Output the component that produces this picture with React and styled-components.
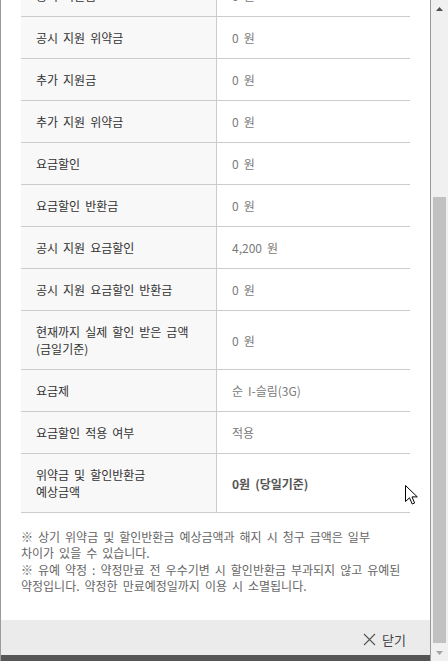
import { useLayoutEffect, useRef } from "react";
import styled, { createGlobalStyle } from "styled-components";

const GlobalStyle = createGlobalStyle`
  html, body {
    margin: 0;
    padding: 0;
    height: 100%;
    overflow: hidden;
    background: #ffffff;
  }
  #root {
    height: 100%;
  }
  * {
    box-sizing: border-box;
  }
`;

const rows = [
  { label: "공시 지원금", value: "0 원" },
  { label: "공시 지원 위약금", value: "0 원" },
  { label: "추가 지원금", value: "0 원" },
  { label: "추가 지원 위약금", value: "0 원" },
  { label: "요금할인", value: "0 원" },
  { label: "요금할인 반환금", value: "0 원" },
  { label: "공시 지원 요금할인", value: "4,200 원" },
  { label: "공시 지원 요금할인 반환금", value: "0 원" },
  { label: ["현재까지 실제 할인 받은 금액", "(금일기준)"], value: "0 원" },
  { label: "요금제", value: "순 I-슬림(3G)" },
  { label: "요금할인 적용 여부", value: "적용" },
  { label: ["위약금 및 할인반환금", "예상금액"], value: "0원 (당일기준)", strong: true },
];

const renderLines = (text) =>
  Array.isArray(text)
    ? text.map((line, i) => (
        <span key={i}>
          {line}
          {i < text.length - 1 && <br />}
        </span>
      ))
    : text;

const App = () => {
  const bodyRef = useRef(null);

  useLayoutEffect(() => {
    // the modal is shown scrolled down a little
    if (bodyRef.current) bodyRef.current.scrollTop = 46;
  }, []);

  return (
    <Page>
      <GlobalStyle />
      <Panel>
        <Body ref={bodyRef}>
          <Table>
            {rows.map((row, i) => (
              <Row key={i}>
                <Label>{renderLines(row.label)}</Label>
                <Value $strong={row.strong}>{row.value}</Value>
              </Row>
            ))}
          </Table>
          <Notes>
            <Note>
              ※ 상기 위약금 및 할인반환금 예상금액과 해지 시 청구 금액은 일부
              <br />
              차이가 있을 수 있습니다.
            </Note>
            <Note>
              ※ 유예 약정 : 약정만료 전 우수기변 시 할인반환금 부과되지 않고 유예된
              <br />
              약정입니다. 약정한 만료예정일까지 이용 시 소멸됩니다.
            </Note>
          </Notes>
        </Body>
        <Footer>
          <CloseButton type="button">
            <svg width="13" height="13" viewBox="0 0 13 13">
              <path d="M1 1 L12 12 M12 1 L1 12" stroke="#555" strokeWidth="1.1" fill="none" />
            </svg>
            닫기
          </CloseButton>
        </Footer>
        <BottomBar />
      </Panel>
      <Scrollbar>
        <ScrollButton>
          <svg width="7" height="4" viewBox="0 0 7 4">
            <path d="M0 4 L3.5 0 L7 4 Z" fill="#505050" />
          </svg>
        </ScrollButton>
        <Track>
          <Thumb />
        </Track>
        <ScrollButton>
          <svg width="7" height="4" viewBox="0 0 7 4">
            <path d="M0 0 L7 0 L3.5 4 Z" fill="#a3a3a3" />
          </svg>
        </ScrollButton>
      </Scrollbar>
      <Cursor width="13" height="20" viewBox="0 0 13 20">
        <path
          d="M0.5 0.5 L0.5 16.5 L4.5 12.8 L7.2 19 L9.6 18 L7 11.9 L12.3 11.9 Z"
          fill="#ffffff"
          stroke="#000000"
          strokeWidth="1"
          strokeLinejoin="round"
        />
      </Cursor>
    </Page>
  );
};

export default App;

const Page = styled.div`
  position: relative;
  display: flex;
  height: 100vh;
  font-family: "Noto Sans CJK KR", "Liberation Sans", sans-serif;
  word-spacing: 2.3px;
`;

const Panel = styled.div`
  display: flex;
  flex-direction: column;
  width: 431px;
  border-left: 1px solid #9a9a9a;
  border-right: 1px solid #9a9a9a;
  background: #ffffff;
`;

const Body = styled.div`
  flex: 1;
  overflow: hidden;
  padding: 20px 20px 29px;
`;

const Table = styled.div`
  border-top: 1px solid #cccccc;
`;

const Row = styled.div`
  display: grid;
  grid-template-columns: 196px 1fr;
  border-bottom: 1px solid #cccccc;
`;

const Label = styled.div`
  display: flex;
  flex-direction: column;
  justify-content: center;
  padding: 12px 15px;
  background: #f8f8f8;
  border-right: 1px solid #cccccc;
  font-size: 12px;
  line-height: 17px;
  color: #333333;
  white-space: nowrap;
`;

const Value = styled.div`
  display: flex;
  align-items: center;
  padding: 12px 15px;
  font-size: 12px;
  line-height: 17px;
  color: ${(p) => (p.$strong ? "#555555" : "#7a7a7a")};
  font-weight: ${(p) => (p.$strong ? 700 : 400)};
`;

const Notes = styled.div`
  margin-top: 16px;
`;

const Note = styled.p`
  margin: 0;
  font-size: 12px;
  line-height: 16.4px;
  color: #666666;
  white-space: nowrap;
`;

const Footer = styled.div`
  display: flex;
  justify-content: flex-end;
  align-items: center;
  height: 35px;
  padding: 3px 24px 0 0;
  background: #ebebeb;
`;

const CloseButton = styled.button`
  display: flex;
  align-items: center;
  gap: 6px;
  padding: 0;
  border: 0;
  background: none;
  font-family: inherit;
  font-size: 13px;
  color: #444444;
  cursor: pointer;
`;

const BottomBar = styled.div`
  height: 6px;
  background: #555555;
`;

const Scrollbar = styled.div`
  display: flex;
  flex-direction: column;
  width: 17px;
  background: #f0f0f0;
`;

const ScrollButton = styled.div`
  display: flex;
  align-items: center;
  justify-content: center;
  height: 17px;
`;

const Track = styled.div`
  flex: 1;
  display: flex;
  flex-direction: column;
  justify-content: flex-end;
  padding: 0 2px 1px;
`;

const Thumb = styled.div`
  height: 446px;
  background: #c1c1c1;
`;

const Cursor = styled.svg`
  position: absolute;
  left: 405px;
  top: 485px;
`;
